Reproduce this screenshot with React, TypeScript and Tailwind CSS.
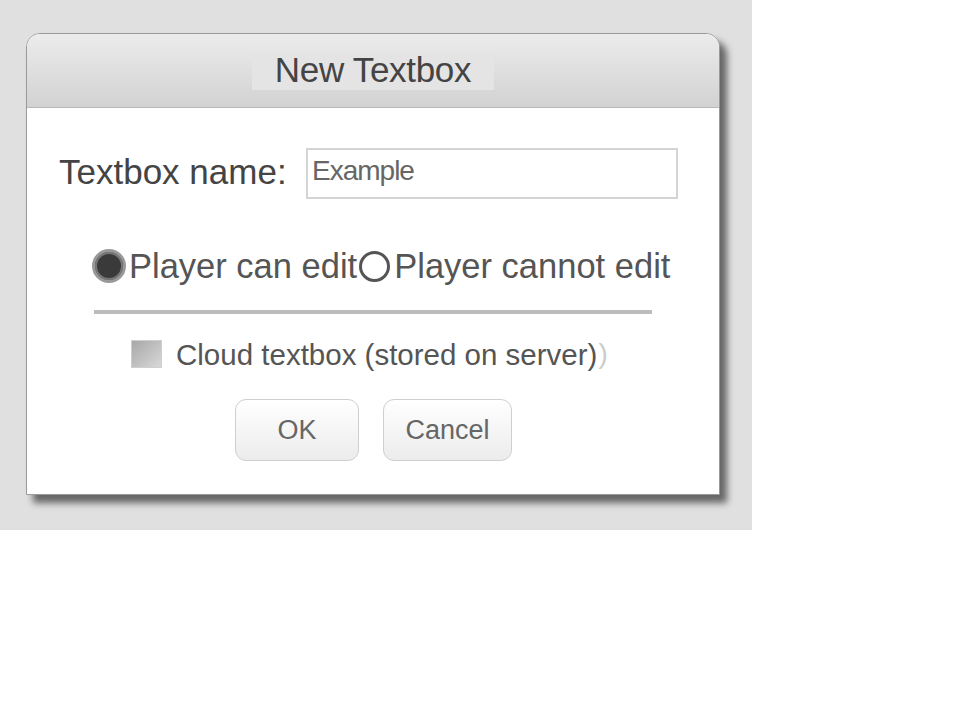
export default function App() {
  return (
    <div
      className="w-[960px] h-[720px] bg-white"
      style={{ fontFamily: '"Liberation Sans", Arial, sans-serif' }}
    >
      <div className="w-[752px] h-[530px] bg-[#dfe0df] pt-[33px] pl-[26px]">
        {/* dialog */}
        <div className="w-[694px] h-[462px] rounded-t-[14px] bg-white flex flex-col shadow-[7px_8px_7px_rgba(0,0,0,0.55)] border border-[#9a9a9a]">
          <div className="h-[74px] shrink-0 rounded-t-[13px] bg-gradient-to-b from-[#ececec] to-[#d2d2d2] border-b border-[#b8b8b8] flex items-center justify-center">
            <div className="w-[242px] h-[38px] bg-[#e4e4e4] flex items-center justify-center text-[35px] text-[#444] tracking-[-0.3px] leading-none pb-[3px]">
              New Textbox
            </div>
          </div>

          <div className="flex flex-col">
            {/* name row */}
            <div className="flex items-center mt-[40px] pl-[32px]">
              <span className="text-[35px] text-[#444] leading-none w-[247px] pb-[4px]">Textbox name:</span>
              <div className="w-[372px] h-[51px] border-2 border-[#d4d4d4] flex items-center pl-[4px] pb-[6px]">
                <span className="text-[28px] text-[#666] leading-none tracking-[-1px]">Example</span>
              </div>
            </div>

            {/* radios */}
            <div className="flex items-center mt-[50px] pl-[65px] text-[34.5px] text-[#555] leading-none">
              <span className="w-[34px] h-[34px] rounded-full border-[3px] border-[#999] bg-[#3a3a3a] shadow-[inset_0_0_0_2px_#777]" />
              <span className="ml-[3px]">Player can edit</span>
              <span className="ml-[2px] w-[31px] h-[31px] rounded-full border-[3px] border-[#555] bg-white" />
              <span className="ml-[4px]">Player cannot edit</span>
            </div>

            {/* divider */}
            <div className="ml-[67px] mt-[26px] w-[558px] h-[4px] bg-[#bcbcbc]" />

            {/* cloud */}
            <div className="flex items-center mt-[26px] pl-[104px] leading-none">
              <span className="w-[31px] h-[28px] bg-gradient-to-br from-[#a8a8a8] to-[#d8d8d8] border border-[#cfcfcf]" />
              <span className="ml-[14px] text-[29.5px] text-[#555]">Cloud textbox (stored on server)</span>
              <span className="ml-[1px] text-[28px] text-[#ccc]">)</span>
            </div>

            {/* buttons */}
            <div className="flex mt-[30px] pl-[208px] gap-[24px]">
              <button className="w-[124px] h-[62px] rounded-[11px] border border-[#cfcfcf] bg-gradient-to-b from-white to-[#ececec] text-[27px] text-[#666] leading-none">
                OK
              </button>
              <button className="w-[129px] h-[62px] rounded-[11px] border border-[#cfcfcf] bg-gradient-to-b from-white to-[#ececec] text-[27px] text-[#666] leading-none">
                Cancel
              </button>
            </div>
          </div>
        </div>
      </div>
    </div>
  );
}
